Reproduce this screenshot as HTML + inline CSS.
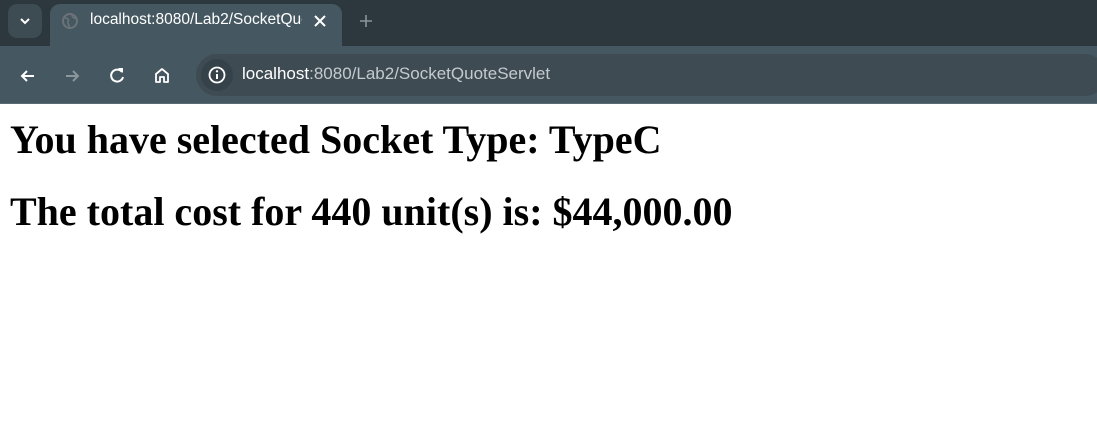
<!DOCTYPE html>
<html><head><style>
*{margin:0;padding:0;box-sizing:border-box}
body{width:1097px;height:442px;background:#fff;position:relative;overflow:hidden;font-family:"Liberation Sans",sans-serif}
.top{position:absolute;left:0;top:0;width:1097px;height:46px;background:#2d383e}
.tab{position:absolute;left:50px;top:4px;width:292px;height:48px;background:#455760;border-radius:10px 10px 0 0}
.tb{position:absolute;left:0;top:46px;width:1097px;height:58px;background:#455760;border-bottom:1px solid #5a6b73}
.omni{position:absolute;left:196px;top:54px;width:910px;height:42px;background:#3e4b53;border-radius:21px}
.dd{position:absolute;left:8px;top:4px;width:34px;height:34px;background:#3d4b52;border-radius:9px}
h1{position:absolute;left:10px;font-family:"Liberation Serif",serif;font-weight:bold;font-size:40px;color:#000;white-space:nowrap;line-height:1}
</style></head><body>
<div class="top"></div>
<div class="tb"></div>
<div class="tab"></div>
<div class="dd"><svg width="34" height="34"><path d="M13 15l4 4 4-4" stroke="#fff" stroke-width="2" fill="none"/></svg></div>
<svg style="position:absolute;left:61px;top:12px" width="18" height="18"><circle cx="9" cy="9" r="7" fill="none" stroke="#6b7378" stroke-width="2"/><path d="M4 6c3 0 4 2 3 4s2 3 1 5M11 3c0 3 3 3 5 4" stroke="#6b7378" stroke-width="1.6" fill="none"/></svg>
<div style="position:absolute;left:90px;top:11px;color:#fff;font-size:15.5px;width:212px;overflow:hidden;white-space:nowrap">localhost:8080/Lab2/SocketQuoteServlet</div>
<svg style="position:absolute;left:312px;top:13px" width="16" height="16"><path d="M3 3l10 10M13 3L3 13" stroke="#fff" stroke-width="2"/></svg>
<svg style="position:absolute;left:358px;top:13px" width="16" height="16"><path d="M8 2v12M2 8h12" stroke="#8a9499" stroke-width="1.6"/></svg>
<svg style="position:absolute;left:18px;top:66px" width="20" height="20"><path d="M16 10H4M9 5l-5 5 5 5" stroke="#fff" stroke-width="2" fill="none"/></svg>
<svg style="position:absolute;left:62px;top:66px" width="20" height="20"><path d="M4 10h12M11 5l5 5-5 5" stroke="#8a979d" stroke-width="2" fill="none"/></svg>
<svg style="position:absolute;left:107px;top:65px" width="20" height="20"><path d="M15 7A6 6 0 1 0 16 12" stroke="#fff" stroke-width="2" fill="none"/><path d="M11 3h5v5z" fill="#fff"/></svg>
<svg style="position:absolute;left:152px;top:65px" width="20" height="20"><path d="M4 17V9l6-5 6 5v8h-4v-5H8v5z" stroke="#fff" stroke-width="1.8" fill="none" stroke-linejoin="round"/></svg>
<div class="omni"></div>
<div style="position:absolute;left:201px;top:59px;width:32px;height:32px;border-radius:16px;background:#35424a"></div>
<svg style="position:absolute;left:207px;top:65px" width="20" height="20"><circle cx="10" cy="10" r="7.5" fill="none" stroke="#fff" stroke-width="1.8"/><path d="M10 9v5" stroke="#fff" stroke-width="2"/><circle cx="10" cy="6.3" r="1.2" fill="#fff"/></svg>
<div style="position:absolute;left:242px;top:64px;font-size:17px;color:#c4cacd;white-space:nowrap"><span style="color:#fff">localhost</span>:8080/Lab2/SocketQuoteServlet</div>
<h1 style="top:120px">You have selected Socket Type: TypeC</h1>
<h1 style="top:192px">The total cost for 440 unit(s) is: $44,000.00</h1>
</body></html>
